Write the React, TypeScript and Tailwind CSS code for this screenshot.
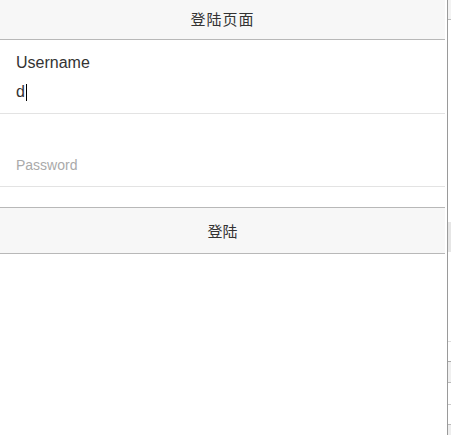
export default function App() {
  const font = { fontFamily: '"Liberation Sans", "Noto Sans CJK SC", sans-serif' };

  return (
    <div className="flex h-[435px] w-[451px] bg-white text-[#333]" style={font}>
      {/* Login page */}
      <div className="flex w-[445px] flex-col">
        <header className="flex h-10 items-center justify-center border-b border-[#b8b8b8] bg-[#f7f7f7] pt-px text-[15px] tracking-[1px]">
          登陆页面
        </header>

        <div className="flex flex-col border-b border-[#e3e3e3] px-4 pt-[13px] pb-[11px]">
          <label className="text-[16px] leading-5">Username</label>
          <div className="mt-[9px] flex h-5 items-center text-[16px] leading-5">
            <span>d</span>
            <span className="ml-px h-[17px] w-px bg-black"></span>
          </div>
        </div>

        <div className="border-b border-[#e3e3e3] px-4 pt-[41px] pb-[11px]">
          <div className="text-[14px] leading-5 text-[#aaa]">Password</div>
        </div>

        <button className="mt-5 flex h-[47px] items-center justify-center border-y border-[#b8b8b8] bg-[#f7f7f7] pt-[3px] text-[15px] text-[#333]">
          登陆
        </button>
      </div>

      {/* edge of the next page */}
      <div className="ml-[2px] flex w-[4px] flex-col border-l border-[#9a9a9a]">
        <div className="h-5 border-b border-[#bbb] bg-[#f3f3f3]"></div>
        <div className="h-[202px]"></div>
        <div className="h-[30px] bg-[#e6e6e6]"></div>
        <div className="h-[90px] border-b border-[#ddd]"></div>
        <div className="h-[20px] border-b border-[#aaa]"></div>
        <div className="h-[21px] border-b border-[#bbb] bg-[#f0f0f0]"></div>
        <div className="h-[22px] border-b border-[#ccc]"></div>
        <div className="h-[20px] border-b border-[#bbb]"></div>
        <div className="flex-1 bg-[#eee]"></div>
      </div>
    </div>
  );
}
